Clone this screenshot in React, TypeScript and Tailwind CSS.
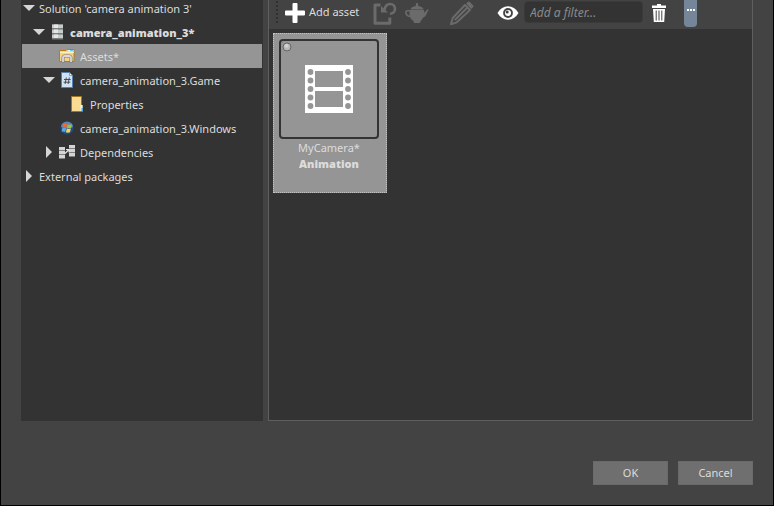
import type { ReactNode } from 'react';

type TreeNode = {
    label: string;
    indent: string;
    icon?: ReactNode;
    arrow?: 'open' | 'closed';
    bold?: boolean;
    selected?: boolean;
};

const nodes: TreeNode[] = [
    { label: "Solution 'camera animation 3'", indent: 'pl-px', arrow: 'open' },
    { label: 'camera_animation_3*', indent: 'pl-[11px]', icon: <PackageIcon />, arrow: 'open', bold: true },
    { label: 'Assets*', indent: 'pl-[21px]', icon: <AssetsIcon />, selected: true },
    { label: 'camera_animation_3.Game', indent: 'pl-[21px]', icon: <CSharpIcon />, arrow: 'open' },
    { label: 'Properties', indent: 'pl-[31px]', icon: <FolderIcon /> },
    { label: 'camera_animation_3.Windows', indent: 'pl-[21px]', icon: <WindowsIcon /> },
    { label: 'Dependencies', indent: 'pl-[21px]', icon: <DependenciesIcon />, arrow: 'closed' },
    { label: 'External packages', indent: 'pl-px', arrow: 'closed' },
];

export default function App() {
    return (
        <div className="flex min-h-screen flex-col border-x border-b border-black bg-[#434343] px-5 font-['Noto_Sans',sans-serif] text-[11px] text-[#dcdcdc]">
            <main className="flex flex-1 gap-[5px]">
                <nav className="w-[242px] shrink-0 overflow-hidden bg-[#333333] px-px" aria-label="Solution">
                    <ul className="-mt-1">
                        {nodes.map((node) => (
                            <TreeRow key={node.label} node={node} />
                        ))}
                    </ul>
                </nav>

                <section className="flex min-w-0 flex-1 flex-col border-x border-b border-[#5f5f5f] bg-[#333333]">
                    <Toolbar />
                    <div className="flex flex-wrap px-1 pt-1">
                        <AssetCard name="MyCamera*" type="Animation" />
                    </div>
                </section>
            </main>

            <footer className="flex justify-end gap-2.5 pt-10 pb-5">
                <DialogButton label="OK" />
                <DialogButton label="Cancel" />
            </footer>
        </div>
    );
}

function TreeRow({ node }: { node: TreeNode }) {
    return (
        <li className={`flex h-6 items-center ${node.indent} ${node.selected ? 'bg-[#959595]' : ''}`}>
            {node.arrow ? (
                <button type="button" className="mr-1 flex size-3 shrink-0 items-center justify-center" aria-label={`Toggle ${node.label}`}>
                    <svg viewBox="0 0 12 12" className="size-3" fill="#d6d6d6">
                        {node.arrow === 'open' ? <path d="M0 3h12L6 9z" /> : <path d="M3 0v12l6-6z" />}
                    </svg>
                </button>
            ) : (
                <span className="mr-1 size-3 shrink-0" />
            )}
            {node.icon && <span className="mr-[5px] size-4 shrink-0">{node.icon}</span>}
            <span className={`pt-0.5 whitespace-nowrap ${node.bold ? 'font-black' : ''}`}>{node.label}</span>
        </li>
    );
}

function Toolbar() {
    return (
        <div className="flex h-[29px] items-start bg-[#434343] pl-[7px]">
            <svg viewBox="0 0 2 24" className="mr-[7px] h-6 w-0.5 shrink-0" fill="#303030">
                {[1, 5, 9, 13, 17, 21].map((y) => (
                    <rect key={y} y={y} width="2" height="2" />
                ))}
            </svg>
            <button type="button" className="flex h-[25px] w-[88px] items-center gap-1 text-xs whitespace-nowrap">
                <svg viewBox="0 0 20 20" className="size-5 shrink-0" fill="#ffffff">
                    <path d="M8.500 0h3q1 0 1 1v6.500h6.500q1 0 1 1v3q0 1-1 1h-6.500v6.500q0 1-1 1h-3q-1 0-1-1v-6.500h-6.500q-1 0-1-1v-3q0-1 1-1h6.500v-6.500q0-1 1-1z" />
                </svg>
                <span className="text-[11px]">Add asset</span>
            </button>
            <button type="button" className="mr-2 flex h-[25px] items-center" aria-label="Reimport" disabled>
                <svg viewBox="0 0 24 24" className="size-6" fill="none" stroke="#6b6b6b">
                    <path d="M7.500 4H2v18.300h14.800V16.500" strokeWidth="3" strokeLinejoin="round" />
                    <path d="M11.500 9C12 5 14.500 3 17.300 3C20 3 22 5 22 7.800C22 10.500 20 12.600 17 12.800" strokeWidth="2.600" />
                    <path d="M8 5v6.500h7z" fill="#6b6b6b" stroke="none" />
                </svg>
            </button>
            <button type="button" className="mr-[21px] flex h-[25px] items-center" aria-label="Preview" disabled>
                <svg viewBox="0 0 24 24" className="size-6" fill="#6b6b6b">
                    <path d="M10.800 5V3.200a1.200 1.200 0 0 1 2.400 0V5q4.300.6 5.300 3h-13q1-2.400 5.300-3z" />
                    <path d="M5.500 8.500h13q1 1.800.8 3.500l2-2.600Q22 8.300 24 8.500q-1.300 1.300-1.800 3-1 3.700-4.300 5.500-1.300 2.500-2.700 3.500v1.500H8.800v-1.500Q5.500 18 4.700 15.500q-.8-4 .8-7z" />
                    <path d="M5 9.800H2.200Q.5 10.200.8 12q.8 3 4.200 3.500" fill="none" stroke="#6b6b6b" strokeWidth="1.500" />
                </svg>
            </button>
            <button type="button" className="mr-[23px] flex h-[25px] items-center" aria-label="Edit" disabled>
                <svg viewBox="0 0 24 24" className="size-6">
                    <path d="M17.800 1q1-1 2 0l3.200 3.200q1 1 0 2l-1.800 1.700-5.100-5.100z" fill="#6b6b6b" />
                    <path d="M15 4l5 5L6.800 21.300 1 23.300 2.700 17z" fill="none" stroke="#6b6b6b" strokeWidth="1.900" strokeLinejoin="round" />
                    <path d="M17.500 6.500L4.800 19" stroke="#6b6b6b" strokeWidth="1.900" />
                    <path d="M0 24l1-4 3 3z" fill="#6b6b6b" />
                </svg>
            </button>
            <button type="button" className="mr-[5px] flex h-[25px] items-center" aria-label="Show filters">
                <svg viewBox="0 0 22 16" className="h-4 w-[22px]">
                    <path d="M0.500 8Q4.500 1.300 11 1.300T21.500 8Q17.500 14.700 11 14.700T0.500 8z" fill="#ffffff" />
                    <circle cx="11" cy="8" r="4.900" fill="#434343" />
                    <circle cx="11" cy="8" r="3" fill="#ffffff" />
                    <circle cx="10.200" cy="7" r="1.500" fill="#434343" />
                </svg>
            </button>
            <input
                type="text"
                placeholder="Add a filter..."
                aria-label="Add a filter"
                className="mt-px mr-[9px] h-[22px] w-[119px] min-w-0 rounded border border-[#3a3a3a] bg-[#333333] px-[5px] text-xs italic outline-none placeholder:text-[#8a8a8a]"
            />
            <button type="button" className="mr-[18px] flex h-[25px] items-center" aria-label="Clear filters">
                <svg viewBox="0 0 14 18" className="h-[18px] w-3.5" fill="#ffffff">
                    <path d="M5 0h4v1.500h5V4H0V1.500h5z" />
                    <path d="M1 5h12l-.8 13H1.800z" />
                    <path d="M4.200 6.500v10M7 6.500v10M9.800 6.500v10" stroke="#434343" strokeWidth="1" />
                </svg>
            </button>
            <button type="button" className="flex h-[27px] w-[13px] shrink-0 items-start justify-center rounded-b bg-[#758698] pt-[9px]" aria-label="More tools">
                <svg viewBox="0 0 8 2" className="h-0.5 w-2" fill="#ffffff">
                    <path d="M0 0h2v2H0zM3 0h2v2H3zM6 0h2v2H6z" />
                </svg>
            </button>
        </div>
    );
}

function AssetCard({ name, type }: { name: string; type: string }) {
    return (
        <article className="relative h-40 w-[114px] border border-dotted border-[#c4c4c4] bg-[#959595] p-[5px] text-center">
            <div className="flex size-[100px] items-center justify-center rounded border-2 border-[#333333]">
                <FilmIcon />
            </div>
            <svg viewBox="0 0 10 10" className="absolute top-2 left-2 size-2.5">
                <circle cx="5" cy="5" r="4" fill="#b8b8b8" stroke="#666666" />
                <circle cx="4.500" cy="3.800" r="2" fill="#d2d2d2" />
            </svg>
            <div className="w-[100px] pt-px leading-4">
                <div>{name}</div>
                <div className="font-black">{type}</div>
            </div>
        </article>
    );
}

function DialogButton({ label }: { label: string }) {
    return (
        <button type="button" className="h-6 w-[75px] border border-[#6a6a6a] bg-[#6f6f6f] pt-px">
            {label}
        </button>
    );
}

function FilmIcon() {
    return (
        <svg viewBox="0 0 48 48" className="size-12">
            <path d="M0 0h48v48H0z" fill="#ffffff" />
            <path d="M10 6h28v16H10zM10 26h28v16H10z" fill="#959595" />
            {[7, 15.500, 24, 32.500, 41].map((y) => (
                <g key={y} fill="#959595">
                    <circle cx="5.500" cy={y} r="2.900" />
                    <circle cx="43" cy={y} r="2.900" />
                </g>
            ))}
        </svg>
    );
}

function PackageIcon() {
    return (
        <svg viewBox="0 0 16 16">
            {[0, 5, 10].map((y) => (
                <g key={y}>
                    <rect x="3" y={y + 0.500} width="11" height="5" fill="#7c7f7d" />
                    <rect x="3" y={y + 0.500} width="11" height="3.500" fill="#c6cdc8" />
                    <rect x="5" y={y + 0.500} width="4" height="3.500" fill="#e5e6e8" />
                </g>
            ))}
        </svg>
    );
}

function AssetsIcon() {
    return (
        <svg viewBox="0 0 16 16">
            <path d="M.5 2.500h6.500l1-1h7v12H.5z" fill="#f6d384" stroke="#b77a1c" />
            <path d="M9 2h5.500v1.500H9z" fill="#e9f8ff" />
            <path d="M11 2h3v1.200h-3z" fill="#63c9ee" />
            <path d="M1 4.500h14" stroke="#fff0bd" />
            <path d="M4 14.500V10q0-2 2-2h4q2 0 2 2v4.500" fill="none" stroke="#77787b" strokeWidth="3" />
            <path d="M4 14V10q0-2 2-2h4q2 0 2 2v4" fill="none" stroke="#d9dade" strokeWidth="1.800" />
        </svg>
    );
}

function CSharpIcon() {
    return (
        <svg viewBox="0 0 16 16">
            <path d="M2.500.5h8l3 3v12h-11z" fill="#cfe3f7" stroke="#5382b5" />
            <path d="M10.500.5v3h3z" fill="#ffffff" stroke="#5382b5" strokeWidth=".7" />
            <path d="M7.300 5.500l-1.200 6.500M10.300 5.500L9.100 12M5 7.500h6.700M4.600 10.200h6.700" stroke="#4a4d52" strokeWidth="1" />
        </svg>
    );
}

function FolderIcon() {
    return (
        <svg viewBox="0 0 16 16">
            <path d="M2.500.5h10v8l1 1v6h-11z" fill="#f7d583" stroke="#a7741d" />
            <path d="M3 1h9v14H3z" fill="#f9dc92" />
            <path d="M11.500 9h2v6h-2z" fill="#e9f6ff" />
            <path d="M12.500 12h1.500v3h-1.500z" fill="#45a9dc" />
        </svg>
    );
}

function WindowsIcon() {
    return (
        <svg viewBox="0 0 16 16">
            <circle cx="8" cy="8" r="6.800" fill="#244c83" stroke="#22324c" strokeWidth=".6" />
            <path d="M2 7a6 5.500 0 0 1 12 0q-6 3-12 0z" fill="#5c84b8" />
            <path d="M4.200 4Q6.400 2.800 8.200 4L7.300 7.600q-1.800-1-3.900 0z" fill="#ed6a36" />
            <path d="M8.800 4.300q2 1 4.200 0l-.9 3.600q-2 .9-4.100 0z" fill="#93c83e" />
            <path d="M3.200 8.300q2.100-.9 3.900 0l-.9 3.600q-1.800-.9-3.500-.2z" fill="#56a9e9" />
            <path d="M7.800 8.600q2 .9 4.100 0l-.9 3.600q-2 .9-4.100 0z" fill="#fbd24b" />
        </svg>
    );
}

function DependenciesIcon() {
    return (
        <svg viewBox="0 0 16 16">
            {[3, 7, 11].map((y) => (
                <g key={y}>
                    <path d={`M0 ${y}h6v4H0z`} fill="#7e8180" />
                    <path d={`M0 ${y}h6v3H0z`} fill="#d2d5d3" />
                    <path d={`M10 ${y - 2}h6v4h-6z`} fill="#7e8180" />
                    <path d={`M10 ${y - 2}h6v3h-6z`} fill="#d2d5d3" />
                </g>
            ))}
            <path d="M6 9.500l4-4" stroke="#e8e8e8" strokeWidth="1.300" />
            <path d="M7 5.500h3v3" fill="none" stroke="#e8e8e8" />
        </svg>
    );
}
